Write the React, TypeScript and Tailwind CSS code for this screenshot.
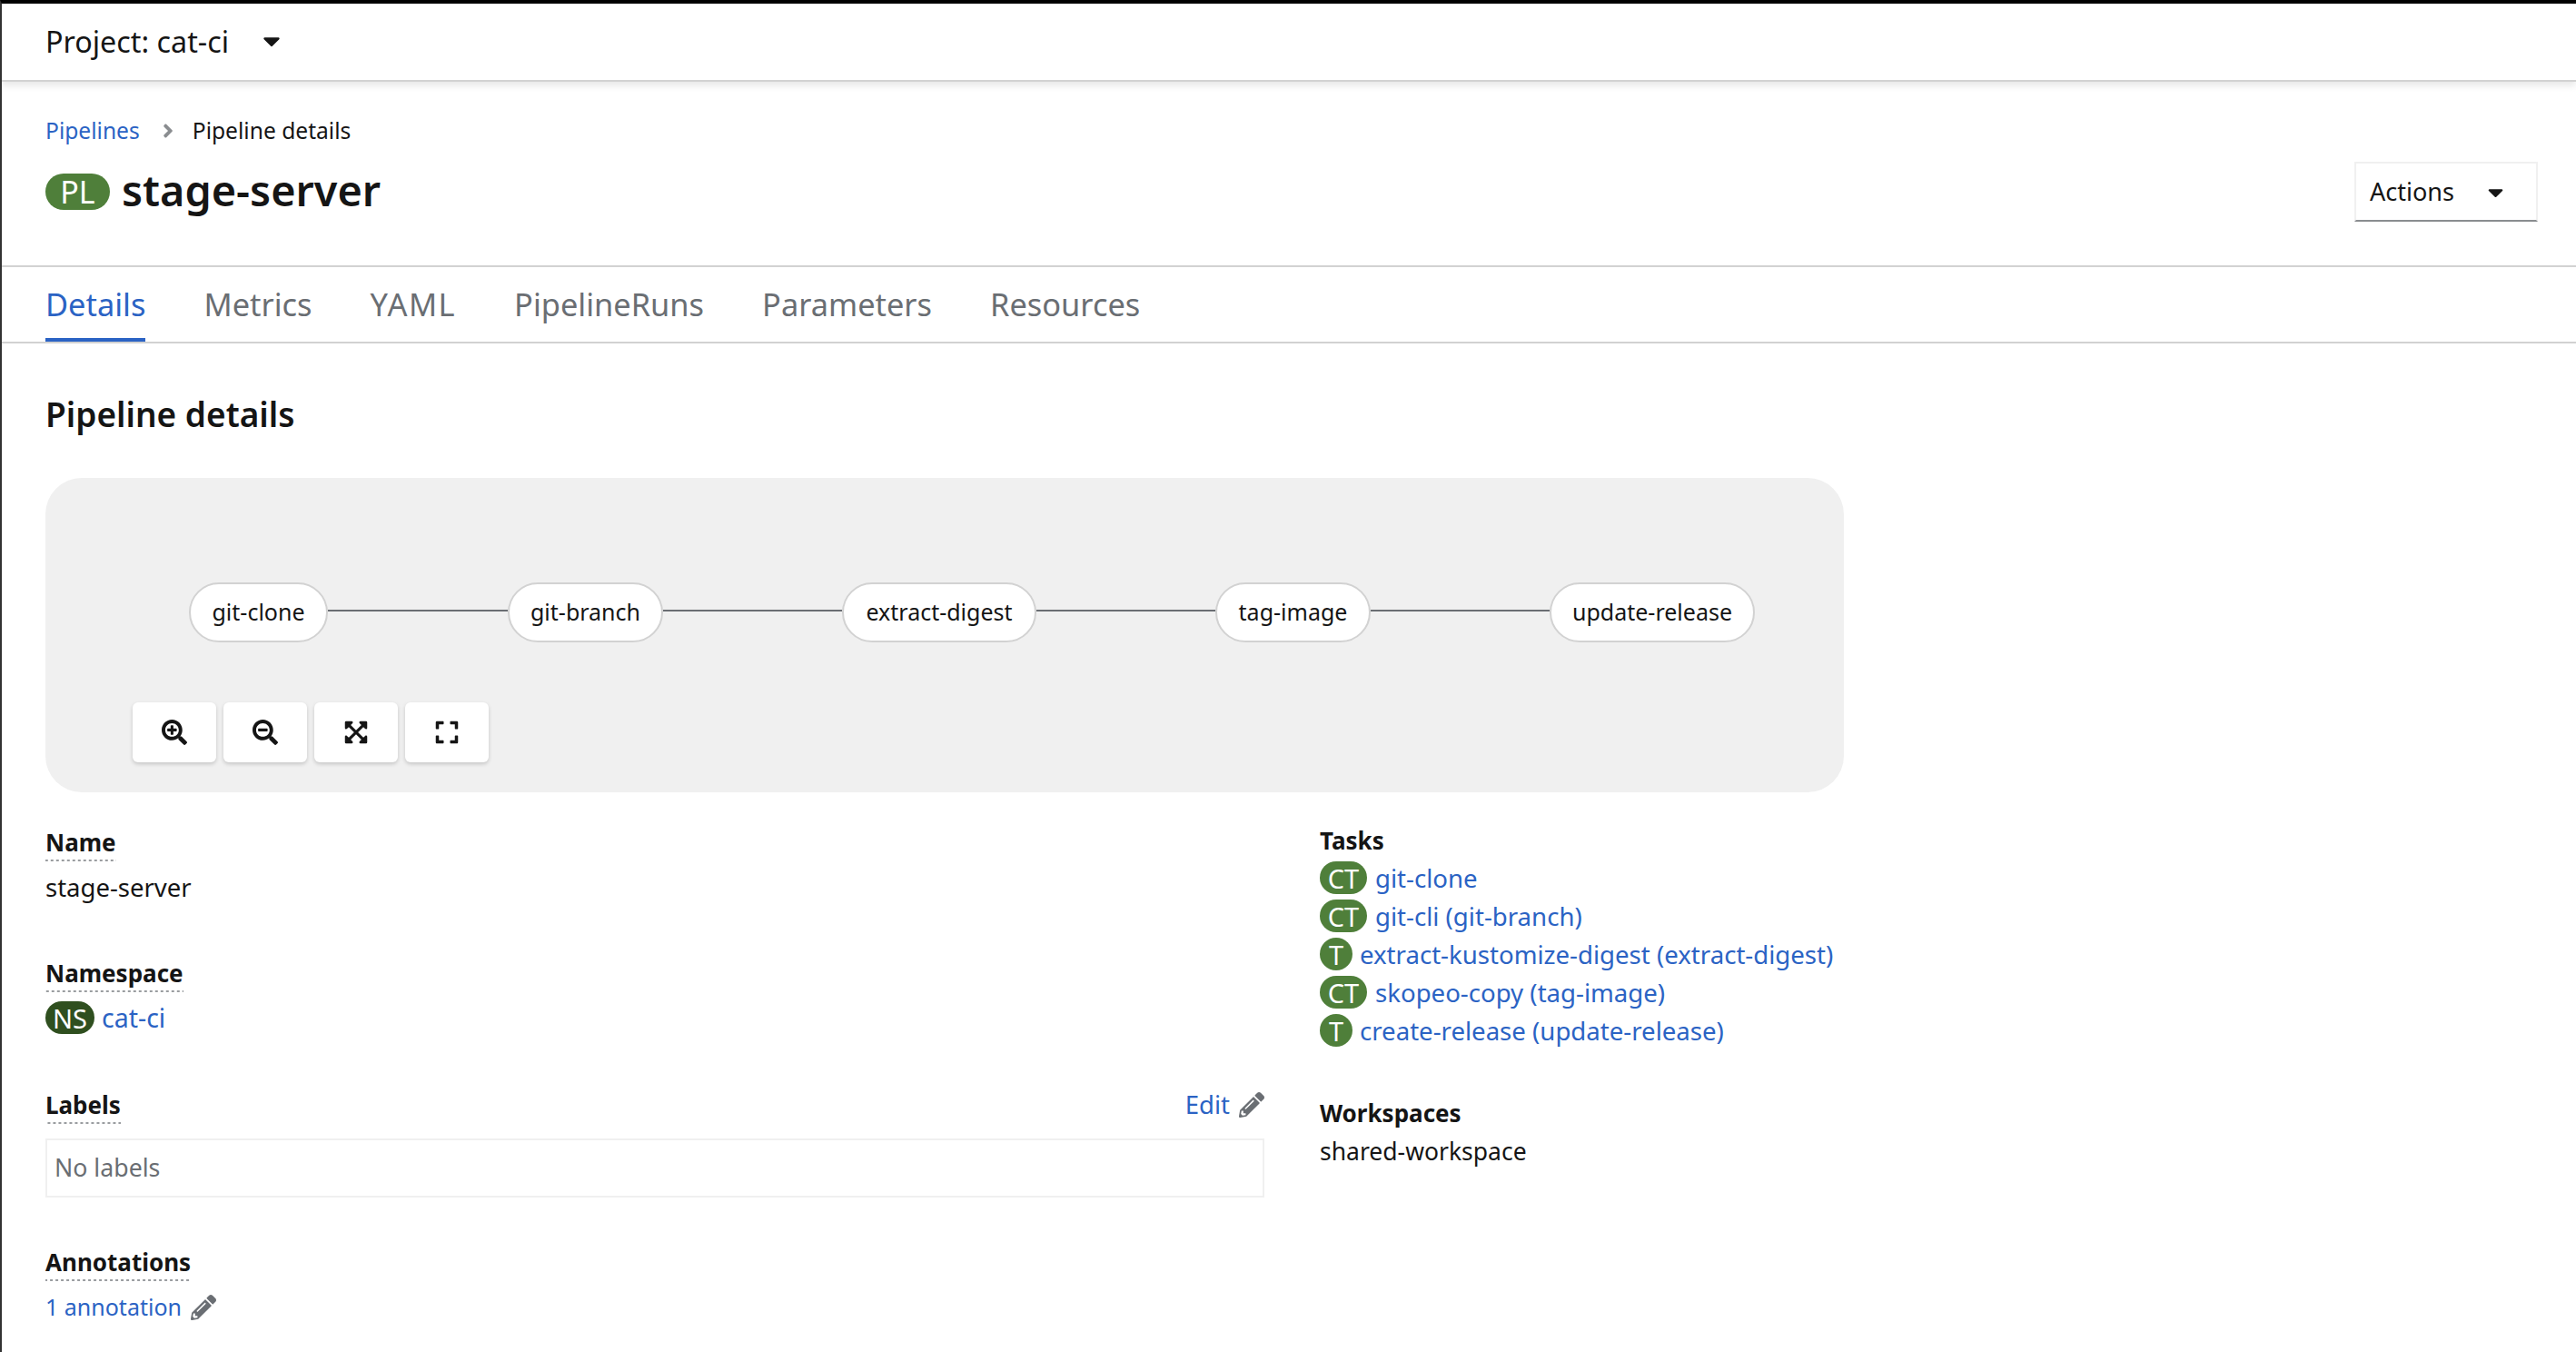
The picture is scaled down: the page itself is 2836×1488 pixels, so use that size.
import React from "react";
import { FaCaretDown, FaAngleRight, FaSearchPlus, FaSearchMinus, FaExpandArrowsAlt, FaExpand, FaPencilAlt } from "react-icons/fa";

const Label = ({ children }: { children: React.ReactNode }) => (
  <div className="flex">
    <span className="h-[40px] bg-[linear-gradient(to_right,#9a9da0_3px,transparent_3px)] bg-[length:6px_2px] bg-bottom bg-repeat-x text-[26px] leading-[38px] font-bold text-[#151515]">{children}</span>
  </div>
);

const Badge = ({ text, color = "bg-[#4f7f3a]", w }: { text: string; color?: string; w: string }) => (
  <span className={`${color} ${w} flex h-[36px] shrink-0 items-center justify-center rounded-[18px] text-[29px] leading-none text-white`}>{text}</span>
);

const Node = ({ name, w }: { name: string; w: string }) => (
  <div className={`${w} flex h-[66px] shrink-0 items-center justify-center rounded-[33px] border-2 border-[#d2d2d2] bg-white text-[25px] text-[#151515]`}>{name}</div>
);

const Edge = ({ w }: { w: string }) => <div className={`${w} h-[2px] shrink-0 -translate-y-[2px] bg-[#6a6e73]`} />;

const ToolBtn = ({ children }: { children: React.ReactNode }) => (
  <div className="flex h-[66px] w-[92px] items-center justify-center rounded-[6px] bg-white text-[28px] text-[#151515] shadow-[0_2px_4px_rgba(0,0,0,0.18)]">{children}</div>
);

const Task = ({ kind, text }: { kind: "CT" | "T"; text: string }) => (
  <div className={`flex h-[36px] items-center ${kind === "CT" ? "gap-[9px]" : "gap-[8px]"}`}>
    <Badge text={kind} w={kind === "CT" ? "w-[52px]" : "w-[36px]"} />
    <a className="text-[27.6px] leading-[36px] text-[#2b63c4]">{text}</a>
  </div>
);

export default function App() {
  return (
    <div className="h-[1488px] w-[2836px] overflow-hidden border-t-4 border-l-2 border-t-black border-l-[#333333] bg-white font-['Noto_Sans',sans-serif] text-[#151515]">
      <header className="relative z-10 flex h-[86px] items-center border-b-2 border-[#d2d2d2] pb-[2px] pl-[48px] shadow-[0_4px_8px_rgba(0,0,0,0.1)]">
        <span className="text-[32.3px] leading-[40px]">Project: cat-ci</span>
        <FaCaretDown className="ml-[32px] text-[30px] text-[#151515]" />
      </header>

      <section className="flex h-[204px] justify-between border-b-2 border-[#d2d2d2] pl-[48px] pr-[42px]">
        <div>
          <nav className="mt-[38px] flex h-[32px] items-center text-[24.6px] leading-[32px]">
            <a className="text-[#2b63c4]">Pipelines</a>
            <FaAngleRight className="ml-[19px] mr-[15px] text-[24px] text-[#8a8d90]" />
            <span>Pipeline details</span>
          </nav>
          <div className="mt-[21px] flex items-center gap-[13px]">
            <span className="mt-[3px] flex h-[40px] w-[71px] items-center justify-center rounded-[20px] bg-[#4f7f3a] text-[34px] leading-none text-white">PL</span>
            <h1 className="text-[46.8px] leading-[56px] font-semibold">stage-server</h1>
          </div>
        </div>
        <button className="mt-[88px] flex h-[66px] w-[202px] items-center border-2 border-[#f0f0f0] border-b-[#8a8d90] pl-[15px] text-[27px] text-[#151515]">
          Actions
          <FaCaretDown className="ml-[32px] text-[27px]" />
        </button>
      </section>

      <nav className="flex h-[84px] gap-[64px] border-b-2 border-[#d2d2d2] pl-[48px] text-[34.4px] text-[#6a6e73]">
        <a className="flex h-[82px] items-center border-b-4 border-[#2b63c4] pt-[3px] text-[#2b63c4]">Details</a>
        <a className="flex h-[82px] items-center">Metrics</a>
        <a className="flex h-[82px] items-center tracking-[1.5px]">YAML</a>
        <a className="flex h-[82px] items-center">PipelineRuns</a>
        <a className="flex h-[82px] items-center">Parameters</a>
        <a className="flex h-[82px] items-center">Resources</a>
      </nav>

      <main className="pl-[48px]">
        <h2 className="mt-[53px] text-[37px] leading-[50px] font-semibold">Pipeline details</h2>

        <div className="mt-[45px] h-[346px] w-[1980px] rounded-[40px] bg-[#f0f0f0] pt-[115px]">
          <div className="flex items-center pl-[158px]">
            <Node name="git-clone" w="w-[153px]" />
            <Edge w="w-[198px]" />
            <Node name="git-branch" w="w-[171px]" />
            <Edge w="w-[197px]" />
            <Node name="extract-digest" w="w-[214px]" />
            <Edge w="w-[197px]" />
            <Node name="tag-image" w="w-[171px]" />
            <Edge w="w-[197px]" />
            <Node name="update-release" w="w-[226px]" />
          </div>
          <div className="mt-[66px] flex gap-[8px] pl-[96px]">
            <ToolBtn><FaSearchPlus /></ToolBtn>
            <ToolBtn><FaSearchMinus /></ToolBtn>
            <ToolBtn><FaExpandArrowsAlt /></ToolBtn>
            <ToolBtn><FaExpand /></ToolBtn>
          </div>
        </div>

        <div className="mt-[34px] flex">
          <div className="w-[1342px]">
            <div className="pt-[2px]"><Label>Name</Label></div>
            <div className="mt-[10px] text-[27.5px] leading-[38px]">stage-server</div>
            <div className="mt-[56px]"><Label>Namespace</Label></div>
            <div className="mt-[10px] flex h-[36px] items-center gap-[8px]">
              <Badge text="NS" color="bg-[#2f4f1f]" w="w-[54px]" />
              <a className="text-[28.5px] text-[#2b63c4]">cat-ci</a>
            </div>
            <div className="mt-[59px] flex items-start justify-between">
              <Label>Labels</Label>
              <div className="flex h-[38px] items-center gap-[10px]">
                <a className="text-[27.5px] text-[#2b63c4]">Edit</a>
                <FaPencilAlt className="text-[28px] text-[#6a6e73]" />
              </div>
            </div>
            <div className="mt-[16px] flex h-[65px] items-center border-2 border-[#f0f0f0] pl-[8px] text-[26.7px] text-[#6a6e73]">No labels</div>
            <div className="mt-[52px]"><Label>Annotations</Label></div>
            <div className="mt-[10px] flex h-[38px] items-center gap-[10px]">
              <a className="text-[25px] text-[#2b63c4]">1 annotation</a>
              <FaPencilAlt className="text-[28px] text-[#6a6e73]" />
            </div>
          </div>
          <div className="ml-[61px]">
            <div className="text-[26px] leading-[38px] font-bold">Tasks</div>
            <div className="mt-[4px] flex flex-col gap-[6px]">
              <Task kind="CT" text="git-clone" />
              <Task kind="CT" text="git-cli (git-branch)" />
              <Task kind="T" text="extract-kustomize-digest (extract-digest)" />
              <Task kind="CT" text="skopeo-copy (tag-image)" />
              <Task kind="T" text="create-release (update-release)" />
            </div>
            <div className="mt-[54px] text-[26px] leading-[38px] font-bold">Workspaces</div>
            <div className="mt-[4px] text-[26.5px] leading-[38px]">shared-workspace</div>
          </div>
        </div>
      </main>
    </div>
  );
}
